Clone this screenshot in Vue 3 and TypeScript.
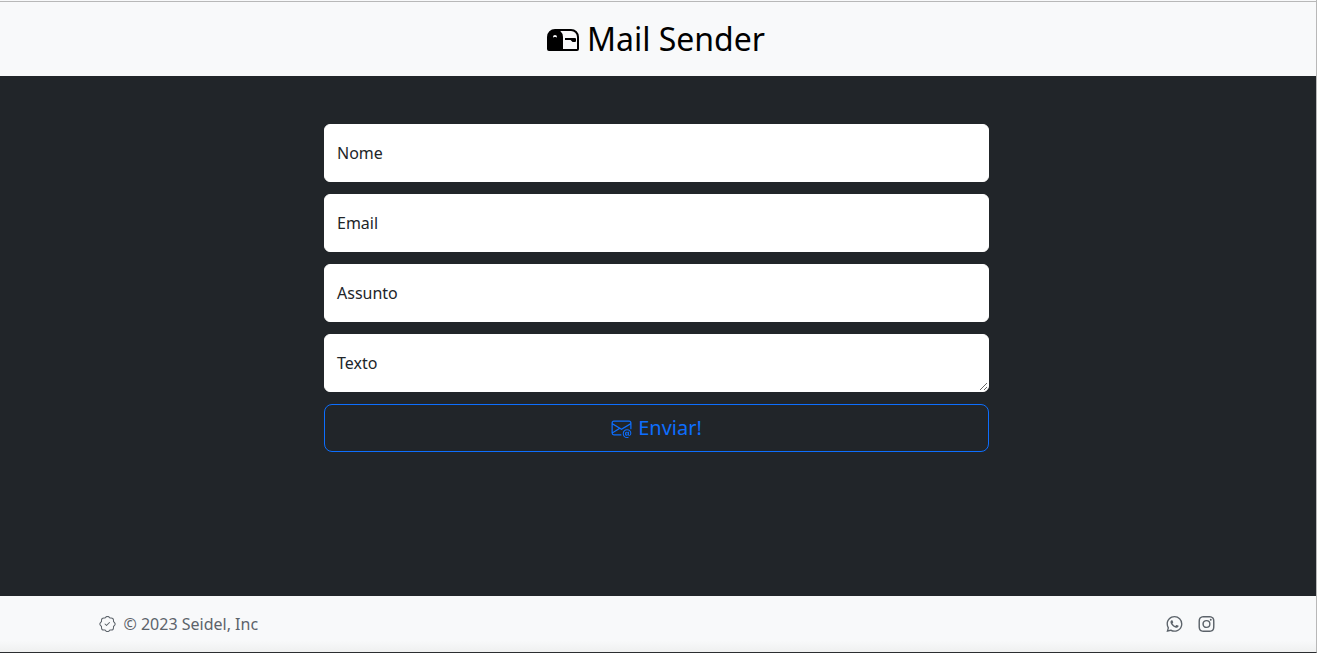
<script setup lang="ts">
import { reactive } from 'vue'

interface Field {
  id: 'nome' | 'email' | 'assunto'
  label: string
  type: string
}

const fields: Field[] = [
  { id: 'nome', label: 'Nome', type: 'text' },
  { id: 'email', label: 'Email', type: 'email' },
  { id: 'assunto', label: 'Assunto', type: 'text' },
]

const form = reactive({ nome: '', email: '', assunto: '', texto: '' })
</script>

<template>
  <div class="page">
    <header class="header">
      <h1 class="title">
        <svg class="title-icon" viewBox="0 0 16 16" fill="currentColor" aria-hidden="true">
          <path d="M9 8.5h2.793l.853.854A.5.5 0 0 0 13 9.5h1a.5.5 0 0 0 .5-.5V8a.5.5 0 0 0-.5-.5H9v1z" />
          <path d="M12 3H4a4 4 0 0 0-4 4v6a1 1 0 0 0 1 1h14a1 1 0 0 0 1-1V7a4 4 0 0 0-4-4zM8 7a3.99 3.99 0 0 0-1.354-3H12a3 3 0 0 1 3 3v6H8V7zm-3.415.157C4.42 7.087 4.218 7 4 7c-.218 0-.42.086-.585.157C3.164 7.264 3 7.334 3 7a1 1 0 0 1 2 0c0 .334-.164.264-.415.157z" />
        </svg>
        <span>Mail Sender</span>
      </h1>
    </header>

    <main class="main">
      <form class="form" @submit.prevent>
        <div v-for="field in fields" :key="field.id" class="field">
          <input :id="field.id" v-model="form[field.id]" class="control" :type="field.type" placeholder=" " />
          <label class="label" :for="field.id">{{ field.label }}</label>
        </div>
        <div class="field">
          <textarea id="texto" v-model="form.texto" class="control" placeholder=" "></textarea>
          <label class="label" for="texto">Texto</label>
        </div>
        <button class="send" type="submit">
          <svg class="send-icon" viewBox="0 0 16 16" fill="currentColor" aria-hidden="true">
            <path d="M2 2a2 2 0 0 0-2 2v8.01A2 2 0 0 0 2 14h5.5a.5.5 0 0 0 0-1H2a1 1 0 0 1-.966-.741l5.64-3.471L8 9.583l7-4.2V8.5a.5.5 0 0 0 1 0V4a2 2 0 0 0-2-2H2Zm3.708 6.208L1 11.105V5.383l4.708 2.825ZM1 4.217V4a1 1 0 0 1 1-1h12a1 1 0 0 1 1 1v.217l-7 4.2-7-4.2Z" />
            <path d="M14.247 14.269c1.01 0 1.587-.857 1.587-2.025v-.21C15.834 10.43 14.64 9 12.52 9h-.035C10.42 9 9 10.36 9 12.432v.214C9 14.82 10.438 16 12.358 16h.044c.594 0 1.018-.074 1.237-.175v-.73c-.245.11-.673.18-1.18.18h-.044c-1.334 0-2.571-.788-2.571-2.655v-.157c0-1.657 1.058-2.724 2.64-2.724h.04c1.535 0 2.484 1.05 2.484 2.326v.118c0 .975-.324 1.39-.639 1.39-.232 0-.41-.148-.41-.42v-2.19h-.906v.569h-.03c-.084-.298-.368-.63-.954-.63-.778 0-1.259.555-1.259 1.4v.528c0 .892.49 1.434 1.26 1.434.471 0 .896-.227 1.014-.643h.043c.118.42.617.648 1.12.648Zm-2.453-1.588v-.227c0-.546.227-.791.573-.791.297 0 .572.192.572.708v.367c0 .573-.253.744-.564.744-.354 0-.581-.215-.581-.8Z" />
          </svg>
          <span>Enviar!</span>
        </button>
      </form>
    </main>

    <footer class="footer">
      <div class="footer-inner">
        <div class="copyright">
          <svg class="icon" viewBox="0 0 16 16" fill="currentColor" aria-hidden="true">
            <path fill-rule="evenodd" d="M10.354 6.146a.5.5 0 0 1 0 .708l-3 3a.5.5 0 0 1-.708 0l-1.5-1.5a.5.5 0 1 1 .708-.708L7 8.793l2.646-2.647a.5.5 0 0 1 .708 0z" />
            <path d="m10.273 2.513-.921-.944.715-.698.622.637.89-.011a2.89 2.89 0 0 1 2.924 2.924l-.01.89.636.622a2.89 2.89 0 0 1 0 4.134l-.637.622.011.89a2.89 2.89 0 0 1-2.924 2.924l-.89-.01-.622.636a2.89 2.89 0 0 1-4.134 0l-.622-.637-.89.011a2.89 2.89 0 0 1-2.924-2.924l.01-.89-.636-.622a2.89 2.89 0 0 1 0-4.134l.637-.622-.011-.89a2.89 2.89 0 0 1 2.924-2.924l.89.01.622-.636a2.89 2.89 0 0 1 4.134 0l-.715.698a1.89 1.89 0 0 0-2.704 0l-.92.944-1.32-.016a1.89 1.89 0 0 0-1.911 1.912l.016 1.318-.944.921a1.89 1.89 0 0 0 0 2.704l.944.92-.016 1.32a1.89 1.89 0 0 0 1.912 1.911l1.318-.016.921.944a1.89 1.89 0 0 0 2.704 0l.92-.944 1.32.016a1.89 1.89 0 0 0 1.911-1.912l-.016-1.318.944-.921a1.89 1.89 0 0 0 0-2.704l-.944-.92.016-1.32a1.89 1.89 0 0 0-1.912-1.911l-1.318.016z" />
          </svg>
          <span>© 2023 Seidel, Inc</span>
        </div>
        <nav class="social">
          <a href="#" aria-label="WhatsApp">
            <svg class="icon" viewBox="0 0 16 16" fill="currentColor" aria-hidden="true">
              <path d="M13.601 2.326A7.854 7.854 0 0 0 7.994 0C3.627 0 .068 3.558.064 7.926c0 1.399.366 2.76 1.057 3.965L0 16l4.204-1.102a7.933 7.933 0 0 0 3.79.965h.004c4.368 0 7.926-3.558 7.93-7.93A7.898 7.898 0 0 0 13.6 2.326zM7.994 14.521a6.573 6.573 0 0 1-3.356-.92l-.24-.144-2.494.654.666-2.433-.156-.251a6.56 6.56 0 0 1-1.007-3.505c0-3.626 2.957-6.584 6.591-6.584a6.56 6.56 0 0 1 4.66 1.931 6.557 6.557 0 0 1 1.928 4.66c-.004 3.639-2.961 6.592-6.592 6.592zm3.615-4.934c-.197-.099-1.17-.578-1.353-.646-.182-.065-.315-.099-.445.099-.133.197-.513.646-.627.775-.114.133-.232.148-.43.05-.197-.1-.836-.308-1.592-.985-.59-.525-.985-1.175-1.103-1.372-.114-.198-.011-.304.088-.403.087-.088.197-.232.296-.346.1-.114.133-.198.198-.33.065-.134.034-.248-.015-.347-.05-.099-.445-1.076-.612-1.47-.16-.389-.323-.335-.445-.34-.114-.007-.247-.007-.38-.007a.729.729 0 0 0-.529.247c-.182.198-.691.677-.691 1.654 0 .977.71 1.916.81 2.049.098.133 1.394 2.132 3.383 2.992.47.205.84.326 1.129.418.475.152.904.129 1.246.08.38-.058 1.171-.48 1.338-.943.164-.464.164-.86.114-.943-.049-.084-.182-.133-.38-.232z" />
            </svg>
          </a>
          <a href="#" aria-label="Instagram">
            <svg class="icon" viewBox="0 0 16 16" fill="currentColor" aria-hidden="true">
              <path d="M8 0C5.829 0 5.556.01 4.703.048 3.85.088 3.269.222 2.76.42a3.917 3.917 0 0 0-1.417.923A3.927 3.927 0 0 0 .42 2.76C.222 3.268.087 3.85.048 4.7.01 5.555 0 5.827 0 8.001c0 2.172.01 2.444.048 3.297.04.852.174 1.433.372 1.942.205.526.478.972.923 1.417.444.445.89.719 1.416.923.51.198 1.09.333 1.942.372C5.555 15.99 5.827 16 8 16s2.444-.01 3.298-.048c.851-.04 1.434-.174 1.943-.372a3.916 3.916 0 0 0 1.416-.923c.445-.445.718-.891.923-1.417.197-.509.332-1.09.372-1.942C15.99 10.445 16 10.173 16 8s-.01-2.445-.048-3.299c-.04-.851-.175-1.433-.372-1.941a3.926 3.926 0 0 0-.923-1.417A3.911 3.911 0 0 0 13.24.42c-.51-.198-1.092-.333-1.943-.372C10.443.01 10.172 0 7.998 0h.003zm-.717 1.442h.718c2.136 0 2.389.007 3.232.046.78.035 1.204.166 1.486.275.373.145.64.319.92.599.28.28.453.546.598.92.11.281.24.705.275 1.485.039.843.047 1.096.047 3.231s-.008 2.389-.047 3.232c-.035.78-.166 1.203-.275 1.485a2.47 2.47 0 0 1-.599.919c-.28.28-.546.453-.92.598-.28.11-.704.24-1.485.276-.843.038-1.096.047-3.232.047s-2.39-.009-3.233-.047c-.78-.036-1.203-.166-1.485-.276a2.478 2.478 0 0 1-.92-.598 2.48 2.48 0 0 1-.6-.92c-.109-.281-.24-.705-.275-1.485-.038-.843-.046-1.096-.046-3.233 0-2.136.008-2.388.046-3.231.036-.78.166-1.204.276-1.486.145-.373.319-.64.599-.92.28-.28.546-.453.92-.598.282-.11.705-.24 1.485-.276.738-.034 1.024-.044 2.515-.045v.002zm4.988 1.328a.96.96 0 1 0 0 1.92.96.96 0 0 0 0-1.92zm-4.27 1.122a4.109 4.109 0 1 0 0 8.217 4.109 4.109 0 0 0 0-8.217zm0 1.441a2.667 2.667 0 1 1 0 5.334 2.667 2.667 0 0 1 0-5.334z" />
            </svg>
          </a>
        </nav>
      </div>
    </footer>
  </div>
</template>

<style>
body {
  margin: 0;
  background: #f8f9fa;
}
</style>

<style scoped>
.page {
  box-sizing: border-box;
  min-height: 100vh;
  display: flex;
  flex-direction: column;
  padding-top: 1px;
  border-right: 1px solid #b8b8b8;
  border-bottom: 1px solid #2b2d30;
  font-family: "Noto Sans", "Liberation Sans", sans-serif;
  font-size: 16px;
  line-height: 24px;
  color: #212529;
  background: #f8f9fa;
}

.page * {
  box-sizing: border-box;
}

.header {
  padding: 16px 4px 16px 0;
  border-top: 1px solid #b8b8b8;
  background: #f8f9fa;
}

.title {
  display: flex;
  align-items: center;
  justify-content: center;
  gap: 8px;
  margin: 0;
  font-size: 32px;
  line-height: 42px;
  font-weight: 400;
  color: #000;
}

.title-icon {
  width: 32px;
  height: 32px;
}

.main {
  flex: 1;
  padding: 48px 3px 48px 0;
  background: #212529;
}

.form {
  width: 100%;
  max-width: 665px;
  margin: 0 auto;
  display: flex;
  flex-direction: column;
  gap: 12px;
}

.field {
  position: relative;
  display: flex;
}

.control {
  width: 100%;
  height: 58px;
  min-height: 58px;
  margin: 0;
  padding: 24px 12px 8px;
  border: 1px solid #fff;
  border-radius: 6px;
  outline: none;
  background: #fff;
  color: #212529;
  font: inherit;
}

textarea.control {
  resize: vertical;
}

.label {
  position: absolute;
  top: 17px;
  left: 13px;
  pointer-events: none;
}

.control:focus + .label,
.control:not(:placeholder-shown) + .label {
  top: 4px;
  font-size: 13px;
  line-height: 20px;
}

.send {
  display: flex;
  align-items: center;
  justify-content: center;
  gap: 6px;
  padding: 8px 16px;
  border: 1px solid #0d6efd;
  border-radius: 8px;
  background: transparent;
  color: #0d6efd;
  font: inherit;
  font-size: 20px;
  line-height: 30px;
  cursor: pointer;
}

.send-icon {
  width: 21px;
  height: 20px;
}

.footer {
  padding: 16px 3px 16px 0;
  background: linear-gradient(#f8f9fa 80%, #eff0f0);
}

.footer-inner {
  display: flex;
  align-items: center;
  justify-content: space-between;
  max-width: 1140px;
  margin: 0 auto;
  padding: 0 12px;
  color: #5c636a;
}

.copyright {
  display: flex;
  align-items: center;
  gap: 8px;
}

.social {
  display: flex;
  gap: 15px;
}

.social a {
  display: flex;
  color: inherit;
}

.icon {
  width: 17px;
  height: 16px;
}
</style>
